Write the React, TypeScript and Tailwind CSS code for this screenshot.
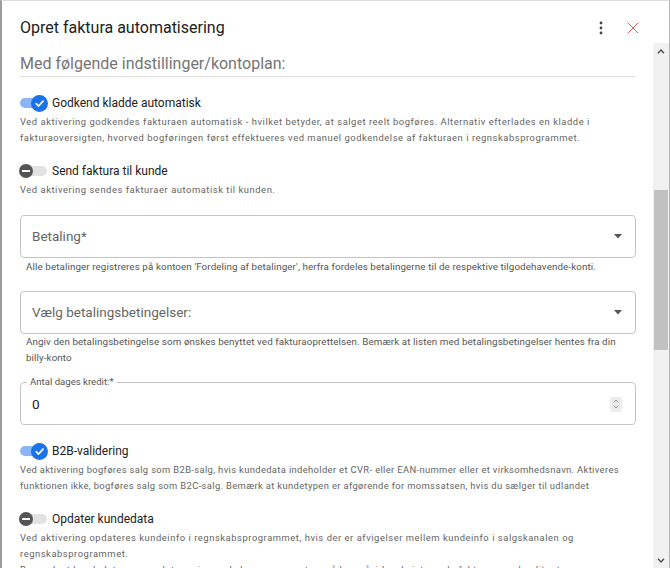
import { X } from "lucide-react";

function Toggle({ on }: { on: boolean }) {
  return (
    <span className="relative inline-block w-[27px] h-[10px] shrink-0">
      <span
        className={`block w-full h-full rounded-full ${on ? "bg-[#8ab4f8]" : "bg-[#e2e2e2]"}`}
      />
      {on ? (
        <span className="absolute left-[11px] top-[-3.5px] w-[17px] h-[17px] rounded-full bg-[#1a73e8] flex items-center justify-center">
          <svg width="11" height="11" viewBox="0 0 10 10">
            <path d="M2 5.2 L4.2 7.3 L8.2 2.8" fill="none" stroke="white" strokeWidth="1.5" strokeLinecap="round" strokeLinejoin="round" />
          </svg>
        </span>
      ) : (
        <span className="absolute left-[-1px] top-[-2px] w-[14px] h-[14px] rounded-full bg-[#555] flex items-center justify-center">
          <span className="block w-[8px] h-[1.5px] bg-white" />
        </span>
      )}
    </span>
  );
}

function Setting({
  on,
  label,
  tight,
  children,
}: {
  on: boolean;
  label: string;
  tight?: boolean;
  children: React.ReactNode;
}) {
  return (
    <div>
      <div className="flex items-center h-[20px]">
        <Toggle on={on} />
        <span className="ml-[5px] text-[12px] text-[#222]">{label}</span>
      </div>
      <p
        className={`mt-[1px] text-[9.4px] leading-[16px] text-[#646464] ${tight ? "tracking-[0.36px]" : "tracking-[0.55px]"}`}
      >
        {children}
      </p>
    </div>
  );
}

function Caret() {
  return (
    <svg width="8" height="5" viewBox="0 0 8 5">
      <polygon points="0,0 8,0 4,4.5" fill="#555" />
    </svg>
  );
}

function SelectField({ label }: { label: string }) {
  return (
    <div className="h-[43px] border border-[#c4c4c4] rounded-[4px] flex items-center justify-between pl-[11px] pr-[13px]">
      <span className="text-[13.5px] text-[#666]">{label}</span>
      <Caret />
    </div>
  );
}

function Chevron({ up }: { up: boolean }) {
  return (
    <svg width="8" height="5" viewBox="0 0 8 5">
      <path d={up ? "M1 4.2 L4 1 L7 4.2" : "M1 0.8 L4 4 L7 0.8"} fill="none" stroke="#505050" strokeWidth="1.4" />
    </svg>
  );
}

export default function App() {
  return (
    <div className="w-[670px] h-[568px] bg-white flex flex-col border-l-2 border-r border-t border-l-[#9a9a9a] border-r-[#b5b5b5] border-t-[#dcdcdc] overflow-hidden font-['Roboto',sans-serif]">
      {/* Header */}
      <div className="h-[42px] shrink-0 flex items-start justify-between pl-[18px] pr-[24px] pt-[17px]">
        <h1 className="text-[16px] leading-[20px] text-[#212121]">Opret faktura automatisering</h1>
        <div className="flex items-center gap-[8px] mt-[-2px]">
          <button className="w-[24px] h-[24px] flex items-center justify-center">
            <svg width="4" height="14" viewBox="0 0 4 14">
              <circle cx="2" cy="2" r="1.4" fill="#444" />
              <circle cx="2" cy="7" r="1.4" fill="#444" />
              <circle cx="2" cy="12" r="1.4" fill="#444" />
            </svg>
          </button>
          <button className="w-[24px] h-[24px] flex items-center justify-center">
            <X size={20} strokeWidth={1.2} color="#e35d5d" />
          </button>
        </div>
      </div>

      {/* Body */}
      <div className="flex flex-1 min-h-0">
        <div className="flex-1 min-w-0 pl-[18px] pr-[17px] overflow-hidden">
          <div className="pt-[10px] pb-[1px] border-b border-[#e0e0e0]">
            <h2 className="text-[16px] leading-[22px] text-[#757575]">Med følgende indstillinger/kontoplan:</h2>
          </div>

          <div className="mt-[16px]">
            <Setting on label="Godkend kladde automatisk">
              Ved aktivering godkendes fakturaen automatisk - hvilket betyder, at salget reelt bogføres. Alternativ efterlades en kladde i fakturaoversigten, hvorved bogføringen først effektueres ved manuel godkendelse af fakturaen i regnskabsprogrammet.
            </Setting>
          </div>

          <div className="mt-[15px]">
            <Setting on={false} label="Send faktura til kunde">
              Ved aktivering sendes fakturaer automatisk til kunden.
            </Setting>
          </div>

          <div className="mt-[17px]">
            <SelectField label="Betaling*" />
            <p className="mt-[1px] px-[6px] text-[9.8px] leading-[16px] text-[#555] tracking-[0.1px]">
              Alle betalinger registreres på kontoen 'Fordeling af betalinger', herfra fordeles betalingerne til de respektive tilgodehavende-konti.
            </p>
          </div>

          <div className="mt-[16px]">
            <SelectField label="Vælg betalingsbetingelser:" />
            <p className="px-[6px] text-[9.8px] leading-[16px] text-[#555] tracking-[0.1px]">
              Angiv den betalingsbetingelse som ønskes benyttet ved fakturaoprettelsen. Bemærk at listen med betalingsbetingelser hentes fra din billy-konto
            </p>
          </div>

          <fieldset className="mt-[10px] border border-[#c4c4c4] rounded-[4px]">
            <legend className="ml-[6px] px-[3px] text-[9.6px] leading-[12px] text-[#555]">Antal dages kredit:*</legend>
            <div className="flex items-center justify-between pl-[11px] pr-[13px] pt-[6px] pb-[10px]">
              <span className="text-[13.5px] leading-[20px] text-[#222]">0</span>
              <span className="w-[12px] h-[15px] bg-[#ececec] rounded-[2px] flex flex-col items-center justify-center gap-[2px]">
                <svg width="6" height="4" viewBox="0 0 6 4">
                  <path d="M0.8 3.4 L3 1 L5.2 3.4" fill="none" stroke="#888" strokeWidth="0.9" />
                </svg>
                <svg width="6" height="4" viewBox="0 0 6 4">
                  <path d="M0.8 0.6 L3 3 L5.2 0.6" fill="none" stroke="#888" strokeWidth="0.9" />
                </svg>
              </span>
            </div>
          </fieldset>

          <div className="mt-[16px]">
            <Setting on tight label="B2B-validering">
              Ved aktivering bogføres salg som B2B-salg, hvis kundedata indeholder et CVR- eller EAN-nummer eller et virksomhedsnavn. Aktiveres funktionen ikke, bogføres salg som B2C-salg. Bemærk at kundetypen er afgørende for momssatsen, hvis du sælger til udlandet
            </Setting>
          </div>

          <div className="mt-[15px]">
            <Setting on={false} label="Opdater kundedata">
              Ved aktivering opdateres kundeinfo i regnskabsprogrammet, hvis der er afvigelser mellem kundeinfo i salgskanalen og regnskabsprogrammet.
              <br />
              Bemærk at kundedata som opdateres i regnskabsprogrammet, også kan påvirke eksisterende fakturaer og kreditnotaer.
            </Setting>
          </div>
        </div>

        {/* Scrollbar */}
        <div className="w-[16px] shrink-0 bg-[#f1f1f1] flex flex-col">
          <div className="h-[16px] flex items-center justify-center">
            <Chevron up />
          </div>
          <div className="flex-1">
            <div className="mt-[131px] h-[160px] mx-[1px] bg-[#c1c1c1]" />
          </div>
          <div className="h-[16px] flex items-center justify-center">
            <Chevron up={false} />
          </div>
        </div>
      </div>
    </div>
  );
}
